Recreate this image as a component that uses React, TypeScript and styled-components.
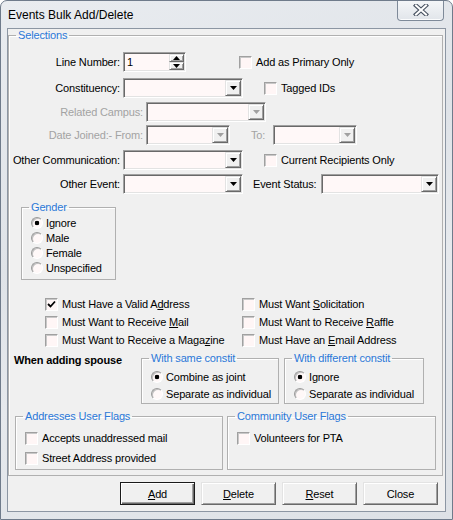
import styled, { createGlobalStyle } from "styled-components";

const GlobalStyle = createGlobalStyle`
  html, body { margin: 0; padding: 0; background: #ffffff; }
  body {
    font-family: "Liberation Sans", Arial, sans-serif;
    font-size: 11px;
    letter-spacing: -0.15px;
    color: #000;
  }
`;

function Arrow({ up, disabled }: { up?: boolean; disabled?: boolean }) {
  const fill = disabled ? "#a0a0a0" : "#000";
  return (
    <svg width="7" height="4" viewBox="0 0 7 4">
      <polygon points={up ? "0,4 7,4 3.5,0" : "0,0 7,0 3.5,4"} fill={fill} />
    </svg>
  );
}

function Check({ checked }: { checked?: boolean }) {
  return (
    <CheckBox>
      {checked && (
        <svg width="9" height="9" viewBox="0 0 9 9">
          <path d="M1 4 L3.5 6.5 L8 1.5" stroke="#000" strokeWidth="1.8" fill="none" />
        </svg>
      )}
    </CheckBox>
  );
}

function Combo({ w, disabled }: { w: number; disabled?: boolean }) {
  return (
    <ComboBox $w={w}>
      <DropButton>
        <Arrow disabled={disabled} />
      </DropButton>
    </ComboBox>
  );
}

function CheckItem({ label, checked, ml }: { label: React.ReactNode; checked?: boolean; ml?: number }) {
  return (
    <CheckRow $ml={ml ?? 0}>
      <Check checked={checked} />
      <span>{label}</span>
    </CheckRow>
  );
}

function RadioItem({ label, on, h }: { label: string; on?: boolean; h: number }) {
  return (
    <RadioRow $h={h}>
      <Radio $on={on} />
      <span>{label}</span>
    </RadioRow>
  );
}

export default function App() {
  return (
    <>
      <GlobalStyle />
      <Window>
        <TitleBar>
          <Title>Events Bulk Add/Delete</Title>
          <CloseButton>
            <svg width="16" height="12" viewBox="0 0 16 12">
              <path d="M3 1.5 L13 10.5 M13 1.5 L3 10.5" stroke="#4a5463" strokeWidth="4.2" strokeLinecap="square" />
              <path d="M3 1.5 L13 10.5 M13 1.5 L3 10.5" stroke="#fff" strokeWidth="2" strokeLinecap="square" />
            </svg>
          </CloseButton>
        </TitleBar>
        <Client>
          <GroupBox $mr={2} $pb={5}>
            <Legend>Selections</Legend>

            <FormRow $mt={10}>
              <FieldLabel $w={111}>Line Number:</FieldLabel>
              <SpinBox>
                <SpinValue>1</SpinValue>
                <SpinButtons>
                  <SpinHalf>
                    <Arrow up />
                  </SpinHalf>
                  <SpinHalf>
                    <Arrow />
                  </SpinHalf>
                </SpinButtons>
              </SpinBox>
              <CheckItem ml={53} label="Add as Primary Only" />
            </FormRow>

            <FormRow $mt={6}>
              <FieldLabel $w={111}>Constituency:</FieldLabel>
              <Combo w={120} />
              <CheckItem ml={21} label="Tagged IDs" />
            </FormRow>

            <FormRow $mt={4}>
              <FieldLabel $w={134} $disabled>Related Campus:</FieldLabel>
              <Combo w={120} disabled />
            </FormRow>

            <FormRow $mt={3}>
              <FieldLabel $w={134} $disabled>Date Joined:- From:</FieldLabel>
              <Combo w={84} disabled />
              <InlineLabel $ml={21} $w={22} $disabled>To:</InlineLabel>
              <Combo w={84} disabled />
            </FormRow>

            <FormRow $mt={5}>
              <FieldLabel $w={111}>Other Communication:</FieldLabel>
              <Combo w={120} />
              <CheckItem ml={21} label="Current Recipients Only" />
            </FormRow>

            <FormRow $mt={4}>
              <FieldLabel $w={111}>Other Event:</FieldLabel>
              <Combo w={120} />
              <InlineLabel $ml={10} $w={68}>Event Status:</InlineLabel>
              <Combo w={118} />
            </FormRow>

            <GroupBox $w={95} $ml={12} $mt={7}>
              <Legend>Gender</Legend>
              <GroupBody $pt={1} $pb={4}>
                <RadioItem h={15} on label="Ignore" />
                <RadioItem h={15} label="Male" />
                <RadioItem h={15} label="Female" />
                <RadioItem h={15} label="Unspecified" />
              </GroupBody>
            </GroupBox>

            <CheckGrid>
              <CheckItem checked label={<>Must Have a Valid A<u>d</u>dress</>} />
              <CheckItem label={<>Must Want <u>S</u>olicitation</>} />
              <CheckItem label={<>Must Want to Receive <u>M</u>ail</>} />
              <CheckItem label={<>Must Want to Receive <u>R</u>affle</>} />
              <CheckItem label={<>Must Want to Receive a Maga<u>z</u>ine</>} />
              <CheckItem label={<>Must Have an <u>E</u>mail Address</>} />
            </CheckGrid>

            <SpouseRow>
              <SpouseLabel>When adding spouse</SpouseLabel>
              <GroupBox $w={138}>
                <Legend>With same constit</Legend>
                <GroupBody $pt={3} $pb={1}>
                  <RadioItem h={17} on label="Combine as joint" />
                  <RadioItem h={17} label="Separate as individual" />
                </GroupBody>
              </GroupBox>
              <GroupBox $w={140} $ml={5}>
                <Legend>With different constit</Legend>
                <GroupBody $pt={3} $pb={1}>
                  <RadioItem h={17} on label="Ignore" />
                  <RadioItem h={17} label="Separate as individual" />
                </GroupBody>
              </GroupBox>
            </SpouseRow>

            <FlagsRow>
              <GroupBox $w={208}>
                <Legend>Addresses User Flags</Legend>
                <GroupBody $pt={5} $pb={1}>
                  <FlagLine>
                    <CheckItem label="Accepts unaddressed mail" />
                  </FlagLine>
                  <FlagLine>
                    <CheckItem label="Street Address provided" />
                  </FlagLine>
                </GroupBody>
              </GroupBox>
              <GroupBox $w={209} $ml={4}>
                <Legend>Community User Flags</Legend>
                <GroupBody $pt={5} $pb={1}>
                  <FlagLine>
                    <CheckItem label="Volunteers for PTA" />
                  </FlagLine>
                  <FlagLine />
                </GroupBody>
              </GroupBox>
            </FlagsRow>
          </GroupBox>

          <ButtonBar>
            <PushButton $default>
              <u>A</u>dd
            </PushButton>
            <PushButton>
              <u>D</u>elete
            </PushButton>
            <PushButton>
              <u>R</u>eset
            </PushButton>
            <PushButton>Close</PushButton>
          </ButtonBar>
        </Client>
      </Window>
    </>
  );
}

const Window = styled.div`
  width: 453px;
  height: 520px;
  box-sizing: border-box;
  border: 1px solid #6f7b8b;
  border-radius: 7px 7px 0 0;
  background: linear-gradient(160deg, #e9ecf0 0%, #dfe3e8 40%, #e6e9ed 60%, #dde1e6 100%);
  display: flex;
  flex-direction: column;
  overflow: hidden;
`;

const TitleBar = styled.div`
  height: 27px;
  display: flex;
  align-items: flex-start;
`;

const Title = styled.div`
  padding: 7px 0 0 7px;
  font-size: 12px;
  line-height: 15px;
  letter-spacing: 0;
  color: #000;
`;

const CloseButton = styled.div`
  margin: -1px 8px 0 auto;
  width: 47px;
  height: 21px;
  box-sizing: border-box;
  border: 1px solid #7e8a99;
  border-top: none;
  border-radius: 0 0 4px 4px;
  background: linear-gradient(#f5f7f9, #e1e5ea);
  box-shadow: inset 0 -1px #fbfcfd;
  display: flex;
  align-items: center;
  justify-content: center;
`;

const Client = styled.div`
  margin: 0 6px;
  height: 484px;
  box-sizing: border-box;
  border: 1px solid #8c96a3;
  background: #f0f0f0;
`;

const GroupBox = styled.fieldset<{ $w?: number; $ml?: number; $mt?: number; $mr?: number; $pb?: number }>`
  box-sizing: border-box;
  ${(p) => (p.$w ? `width: ${p.$w}px;` : "")}
  min-width: 0;
  margin: ${(p) => p.$mt ?? 0}px ${(p) => p.$mr ?? 0}px 0 ${(p) => p.$ml ?? 0}px;
  padding: 0 0 ${(p) => p.$pb ?? 0}px 0;
  border: 1px solid #b0b0b0;
  box-shadow: inset 1px 1px #ffffff;
`;

const Legend = styled.legend`
  margin-left: 7px;
  padding: 0 2px;
  line-height: 13px;
  font-size: 11px;
  color: #2b78d8;
`;

const GroupBody = styled.div<{ $pt: number; $pb: number }>`
  padding: ${(p) => p.$pt}px 0 ${(p) => p.$pb}px 9px;
`;

const FormRow = styled.div<{ $mt: number }>`
  display: flex;
  align-items: center;
  height: 20px;
  margin-top: ${(p) => p.$mt}px;
`;

const FieldLabel = styled.div<{ $w: number; $disabled?: boolean }>`
  width: ${(p) => p.$w}px;
  margin-right: 3px;
  text-align: right;
  white-space: nowrap;
  color: ${(p) => (p.$disabled ? "#a3a3a3" : "#000")};
`;

const InlineLabel = styled.div<{ $ml: number; $w: number; $disabled?: boolean }>`
  width: ${(p) => p.$w}px;
  margin-left: ${(p) => p.$ml}px;
  white-space: nowrap;
  color: ${(p) => (p.$disabled ? "#a3a3a3" : "#000")};
`;

const ComboBox = styled.div<{ $w: number }>`
  width: ${(p) => p.$w}px;
  height: 20px;
  box-sizing: border-box;
  border: 1px solid;
  border-color: #a0a0a0 #ffffff #ffffff #a0a0a0;
  box-shadow: inset 1px 1px #696969, inset -1px -1px #e3e3e3;
  background: #fff8f8;
  display: flex;
  justify-content: flex-end;
  padding: 1px;
`;

const DropButton = styled.div`
  width: 16px;
  height: 100%;
  box-sizing: border-box;
  background: #f0f0f0;
  border: 1px solid;
  border-color: #e3e3e3 #696969 #696969 #e3e3e3;
  box-shadow: inset 1px 1px #ffffff, inset -1px -1px #a0a0a0;
  display: flex;
  align-items: center;
  justify-content: center;
`;

const SpinBox = styled(ComboBox).attrs({ $w: 63 })`
  justify-content: space-between;
  align-items: stretch;
`;

const SpinValue = styled.div`
  padding-left: 2px;
  line-height: 16px;
`;

const SpinButtons = styled.div`
  width: 15px;
  display: flex;
  flex-direction: column;
`;

const SpinHalf = styled(DropButton)`
  width: 100%;
  height: 50%;
`;

const CheckRow = styled.div<{ $ml: number }>`
  display: flex;
  align-items: center;
  gap: 4px;
  margin-left: ${(p) => p.$ml}px;
  white-space: nowrap;
`;

const CheckBox = styled.span`
  width: 13px;
  height: 13px;
  box-sizing: border-box;
  border: 1px solid;
  border-color: #a0a0a0 #ffffff #ffffff #a0a0a0;
  box-shadow: inset 1px 1px #c8c8c8;
  background: #fff6f6;
  display: flex;
  align-items: center;
  justify-content: center;
  flex: none;
`;

const RadioRow = styled.div<{ $h: number }>`
  display: flex;
  align-items: center;
  gap: 3px;
  height: ${(p) => p.$h}px;
  white-space: nowrap;
`;

const Radio = styled.span<{ $on?: boolean }>`
  width: 12px;
  height: 12px;
  box-sizing: border-box;
  border-radius: 50%;
  border: 1px solid;
  border-color: #9a9a9a #ffffff #ffffff #9a9a9a;
  box-shadow: inset 1px 1px #c0c0c0;
  background: ${(p) =>
    p.$on ? "radial-gradient(circle, #000 0 2px, #fff8f8 2.6px)" : "#fff8f8"};
  flex: none;
`;

const CheckGrid = styled.div`
  display: grid;
  grid-template-columns: 197px 197px;
  grid-auto-rows: 18px;
  align-items: center;
  margin: 15px 0 0 36px;
`;

const SpouseRow = styled.div`
  display: flex;
  align-items: flex-start;
  margin-top: 3px;
`;

const SpouseLabel = styled.div`
  width: 127px;
  margin: 2px 0 0 5px;
  line-height: 13px;
  font-weight: bold;
  white-space: nowrap;
`;

const FlagsRow = styled.div`
  display: flex;
  align-items: flex-start;
  margin: 6px 0 0 6px;
`;

const FlagLine = styled.div`
  height: 20px;
  display: flex;
  align-items: center;
`;

const ButtonBar = styled.div`
  display: flex;
  justify-content: flex-end;
  gap: 6px;
  margin-top: 6px;
  padding-right: 7px;
`;

const PushButton = styled.button<{ $default?: boolean }>`
  width: 75px;
  height: 23px;
  box-sizing: border-box;
  padding: 0;
  font-family: "Liberation Sans", Arial, sans-serif;
  font-size: 11px;
  letter-spacing: -0.15px;
  color: #000;
  background: #f0f0f0;
  border: 1px solid;
  border-color: ${(p) => (p.$default ? "#1a1a1a" : "#e3e3e3 #696969 #696969 #e3e3e3")};
  box-shadow: ${(p) =>
    p.$default
      ? "inset 1px 1px #ffffff, inset -1px -1px #696969, inset -2px -2px #a0a0a0"
      : "inset 1px 1px #ffffff, inset -1px -1px #a0a0a0"};
`;
